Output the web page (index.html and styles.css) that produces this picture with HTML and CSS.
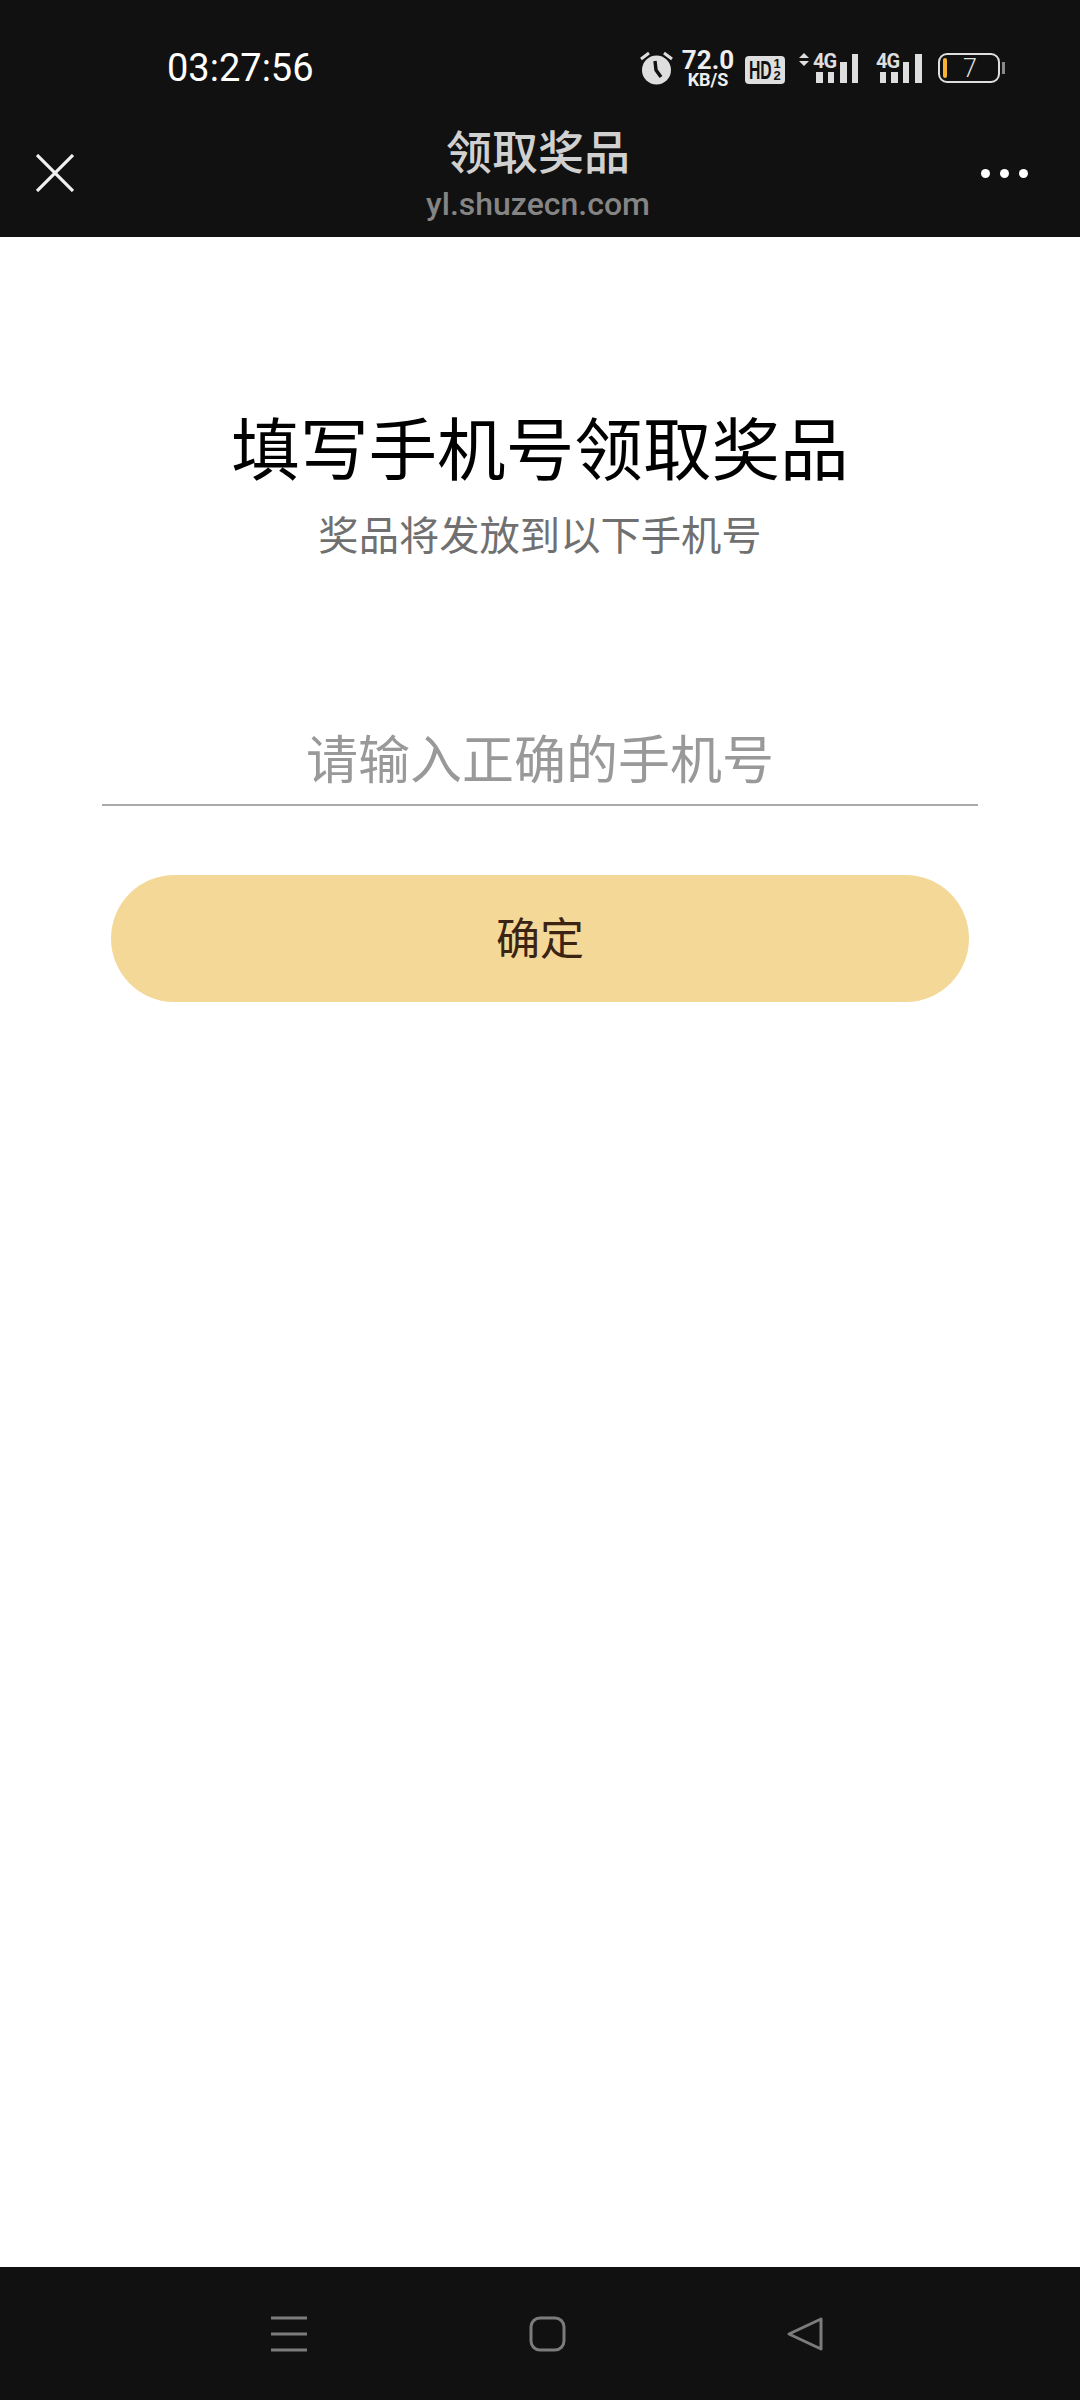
FILE: index.html
```html
<!DOCTYPE html>
<html lang="zh-CN">
<head>
    <meta charset="UTF-8">
    <meta name="viewport" content="width=device-width, initial-scale=1.0">
    <title>领取奖品</title>
    <link rel="stylesheet" href="styles.css">
</head>
<body>
    <header class="top-bar">
        <div class="status-bar">
            <span class="clock">03:27:56</span>
            <div class="status-icons">
                <svg class="alarm" width="33" height="34" viewBox="0 0 33 34">
                    <circle cx="16.5" cy="19" r="14.5" fill="#dedede"/>
                    <path d="M15 10l1 9 5 7" fill="none" stroke="#111" stroke-width="3.4"/>
                    <path d="M1 8l8-6M32 8l-8-6" stroke="#dedede" stroke-width="3"/>
                </svg>
                <div class="speed">
                    <span class="speed-value">72.0</span>
                    <span class="speed-unit">KB/S</span>
                </div>
                <div class="hd-badge">
                    <span class="hd-text">HD</span>
                    <span class="hd-sims"><span>1</span><span>2</span></span>
                </div>
                <svg class="signal" width="60" height="38" viewBox="0 0 60 38">
                    <path d="M0 9l5-5 5 5zM0 12l5 5 5-5z" fill="#dedede"/>
                    <text x="14" y="19" class="net-label">4G</text>
                    <path d="M17 23h7v11h-7zM29 23h6v11h-6zM41 13h7v21h-7zM53 5h6v29h-6z" fill="#dedede"/>
                </svg>
                <svg class="signal" width="46" height="38" viewBox="0 0 46 38">
                    <text x="0" y="19" class="net-label">4G</text>
                    <path d="M4 23h6v11H4zM15 23h7v11h-7zM27 13h6v21h-6zM39 5h7v29h-7z" fill="#dedede"/>
                </svg>
                <div class="battery">
                    <span class="battery-fill"></span>
                    <span class="battery-level">7</span>
                    <span class="battery-cap"></span>
                </div>
            </div>
        </div>
        <div class="title-bar">
            <svg class="close-icon" width="38" height="38" viewBox="0 0 38 38">
                <path d="M1 1l36 36M37 1L1 37" stroke="#f0f0f0" stroke-width="3.2" fill="none"/>
            </svg>
            <div class="page-title">
                <h1>领取奖品</h1>
                <p>yl.shuzecn.com</p>
            </div>
            <div class="more-icon"><span></span><span></span><span></span></div>
        </div>
    </header>

    <main class="prize-page">
        <h2>填写手机号领取奖品</h2>
        <p class="hint">奖品将发放到以下手机号</p>
        <form class="prize-form">
            <input type="text" class="phone-input" placeholder="请输入正确的手机号">
            <button type="button" class="confirm-btn">确定</button>
        </form>
    </main>

    <nav class="nav-bar">
        <svg width="38" height="36" viewBox="0 0 38 36">
            <path d="M1 2h36M1 18h36M1 34h36" stroke="#7c7c7c" stroke-width="3"/>
        </svg>
        <svg width="38" height="36" viewBox="0 0 38 36">
            <rect x="2" y="2" width="33" height="32" rx="9" fill="none" stroke="#7c7c7c" stroke-width="3"/>
        </svg>
        <svg width="38" height="36" viewBox="0 0 38 36">
            <path d="M34 3v30L2 18z" fill="none" stroke="#7c7c7c" stroke-width="3" stroke-linejoin="round"/>
        </svg>
    </nav>
</body>
</html>
```

FILE: styles.css
```css
* {
    box-sizing: border-box;
}
body {
    margin: 0;
    width: 1080px;
    height: 2400px;
    display: flex;
    flex-direction: column;
    background: white;
    font-family: "Noto Sans CJK SC", Roboto, sans-serif;
}

/* top bar */
.top-bar {
    height: 237px;
    background-color: #111;
}
.status-bar {
    height: 118px;
    padding: 46px 80px 0 167px;
    display: flex;
    justify-content: space-between;
    align-items: flex-start;
}
.clock {
    font-family: Roboto, sans-serif;
    font-size: 38px;
    line-height: 44px;
    color: white;
}
.status-icons {
    display: flex;
    align-items: center;
    height: 44px;
    color: #eee;
}
.alarm {
    margin-right: 10px;
}
.speed {
    display: flex;
    flex-direction: column;
    align-items: center;
    font-family: Roboto, sans-serif;
    font-weight: 700;
    margin-right: 12px;
    width: 50px;
}
.speed-value {
    font-size: 26px;
    line-height: 24px;
}
.speed-unit {
    font-size: 18px;
    line-height: 16px;
}
.hd-badge {
    display: flex;
    align-items: center;
    width: 40px;
    height: 28px;
    padding-left: 4px;
    margin-top: 3px;
    margin-right: 14px;
    border-radius: 4px;
    background-color: #dedede;
    color: #111;
    font-family: "Liberation Sans", sans-serif;
    font-weight: 700;
}
.hd-text {
    display: block;
    width: 22px;
    font-size: 25px;
    line-height: 28px;
    white-space: nowrap;
    transform: scaleX(0.63);
    transform-origin: left center;
}
.hd-sims {
    display: flex;
    flex-direction: column;
    align-items: center;
    width: 12px;
    font-size: 13px;
    line-height: 12px;
}
.signal {
    margin-right: 17px;
}
.net-label {
    font-family: Roboto, sans-serif;
    font-weight: 700;
    font-size: 20px;
    letter-spacing: -1px;
    fill: #dedede;
}
.battery {
    position: relative;
    width: 62px;
    height: 30px;
    margin-left: -1px;
    border: 2px solid #dedede;
    border-radius: 9px;
    display: flex;
    align-items: center;
    padding-left: 3px;
    font-family: Roboto, sans-serif;
    font-weight: 300;
    font-size: 25px;
    color: #dedede;
}
.battery-fill {
    width: 4px;
    height: 20px;
    border-radius: 2px;
    background-color: #f9b233;
}
.battery-level {
    margin-left: 16px;
}
.battery-cap {
    position: absolute;
    right: -7px;
    top: 7px;
    width: 3px;
    height: 12px;
    background-color: #888;
}

.title-bar {
    display: grid;
    grid-template-columns: 1fr auto 1fr;
    padding: 0 40px 10px 36px;
    align-items: center;
    height: 119px;
}
.page-title {
    text-align: center;
}
.page-title h1 {
    margin: 0;
    font-size: 46px;
    line-height: 62px;
    font-weight: 500;
    color: #d0d0d0;
}
.page-title p {
    margin: 0;
    font-family: Roboto, sans-serif;
    font-weight: 500;
    font-size: 32px;
    line-height: 48px;
    color: #858585;
}
.more-icon {
    justify-self: end;
    display: flex;
    gap: 10px;
    padding-right: 12px;
}
.more-icon span {
    width: 9px;
    height: 9px;
    border-radius: 50%;
    background-color: white;
}

/* form */
.prize-page {
    flex: 1;
    padding-top: 162px;
    text-align: center;
}
.prize-page h2 {
    margin: 0;
    font-size: 68.6px;
    line-height: 92px;
    font-weight: 400;
    color: black;
}
.hint {
    margin: 15px 0 0;
    font-size: 40.3px;
    line-height: 54px;
    color: #707070;
}
.prize-form {
    margin-top: 149px;
    padding: 0 102px;
}
.phone-input {
    display: block;
    width: 100%;
    height: 97px;
    padding: 0;
    border: none;
    border-bottom: 2px solid #aaa;
    border-radius: 0;
    outline: none;
    text-align: center;
    font-family: "Noto Sans CJK SC", sans-serif;
    font-size: 52px;
}
.phone-input::placeholder {
    color: #999;
    opacity: 1;
}
.confirm-btn {
    display: block;
    width: 858px;
    height: 127px;
    margin: 69px 0 0 9px;
    padding: 0 0 6px;
    border: none;
    border-radius: 64px;
    background-color: #f4d897;
    color: #3c2414;
    font-family: "Noto Sans CJK SC", sans-serif;
    font-size: 44px;
}

/* bottom nav */
.nav-bar {
    height: 133px;
    background-color: #111;
    padding: 0 255px 0 270px;
    display: flex;
    justify-content: space-between;
    align-items: center;
}
```
